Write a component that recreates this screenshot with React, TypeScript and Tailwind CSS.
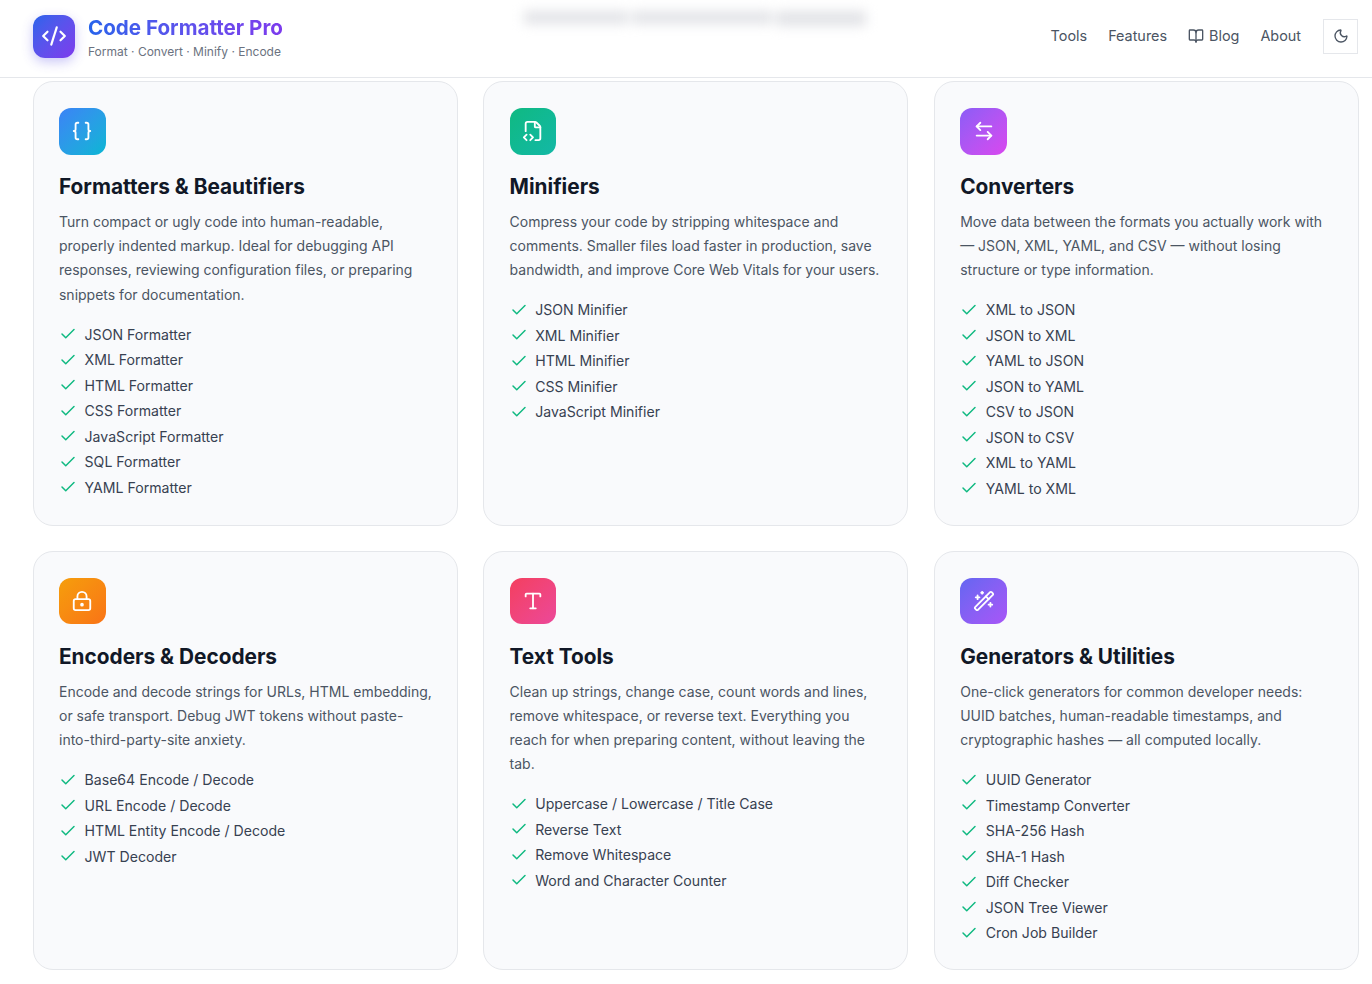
import React from 'react';
import { ArrowLeftRight, BookOpen, Braces, Check, CodeXml, FileCode2, LockKeyhole, Moon, Type, WandSparkles } from 'lucide-react';

interface ToolGroup {
  title: string;
  description: string;
  icon: React.ElementType;
  iconClass: string;
  tools: string[];
}

const groups: ToolGroup[] = [
  {
    title: 'Formatters & Beautifiers',
    description:
      'Turn compact or ugly code into human-readable, properly indented markup. Ideal for debugging API responses, reviewing configuration files, or preparing snippets for documentation.',
    icon: Braces,
    iconClass: 'from-[#3b82f6] to-[#06b6d4]',
    tools: ['JSON Formatter', 'XML Formatter', 'HTML Formatter', 'CSS Formatter', 'JavaScript Formatter', 'SQL Formatter', 'YAML Formatter'],
  },
  {
    title: 'Minifiers',
    description:
      'Compress your code by stripping whitespace and comments. Smaller files load faster in production, save bandwidth, and improve Core Web Vitals for your users.',
    icon: FileCode2,
    iconClass: 'from-[#10b981] to-[#14b8a6]',
    tools: ['JSON Minifier', 'XML Minifier', 'HTML Minifier', 'CSS Minifier', 'JavaScript Minifier'],
  },
  {
    title: 'Converters',
    description:
      'Move data between the formats you actually work with — JSON, XML, YAML, and CSV — without losing structure or type information.',
    icon: ArrowLeftRight,
    iconClass: 'from-[#8b5cf6] to-[#d946ef]',
    tools: ['XML to JSON', 'JSON to XML', 'YAML to JSON', 'JSON to YAML', 'CSV to JSON', 'JSON to CSV', 'XML to YAML', 'YAML to XML'],
  },
  {
    title: 'Encoders & Decoders',
    description:
      'Encode and decode strings for URLs, HTML embedding, or safe transport. Debug JWT tokens without paste-into-third-party-site anxiety.',
    icon: LockKeyhole,
    iconClass: 'from-[#f59e0b] to-[#f97316]',
    tools: ['Base64 Encode / Decode', 'URL Encode / Decode', 'HTML Entity Encode / Decode', 'JWT Decoder'],
  },
  {
    title: 'Text Tools',
    description:
      'Clean up strings, change case, count words and lines, remove whitespace, or reverse text. Everything you reach for when preparing content, without leaving the tab.',
    icon: Type,
    iconClass: 'from-[#f43f5e] to-[#ec4899]',
    tools: ['Uppercase / Lowercase / Title Case', 'Reverse Text', 'Remove Whitespace', 'Word and Character Counter'],
  },
  {
    title: 'Generators & Utilities',
    description:
      'One-click generators for common developer needs: UUID batches, human-readable timestamps, and cryptographic hashes — all computed locally.',
    icon: WandSparkles,
    iconClass: 'from-[#6366f1] to-[#a855f7]',
    tools: ['UUID Generator', 'Timestamp Converter', 'SHA-256 Hash', 'SHA-1 Hash', 'Diff Checker', 'JSON Tree Viewer', 'Cron Job Builder'],
  },
];

const ToolCard: React.FC<{ group: ToolGroup }> = ({ group }) => {
  const Icon = group.icon;
  return (
    <div className="rounded-[20px] border border-[#e5e7eb] bg-[#f9fafc] pt-[26px] pr-[24px] pb-[23.7px] pl-[25.2px]">
      <div className={`flex h-[46.6px] w-[46.8px] items-center justify-center rounded-[12px] bg-gradient-to-br text-white ${group.iconClass}`}>
        <Icon className="h-[22px] w-[22px]" strokeWidth={2} />
      </div>
      <h3 className="mt-[18.8px] text-[20.8px] leading-[28px] font-bold text-[#111827]">{group.title}</h3>
      <p className="mt-[8.6px] text-[14px] leading-[24.2px] text-[#4b5563]">{group.description}</p>
      <ul className="mt-[14.65px] flex flex-col">
        {group.tools.map((tool) => (
          <li key={tool} className="flex h-[25.5px] items-center gap-[7.6px] text-[14.1px] text-[#374151]">
            <Check className="h-[18px] w-[18px] text-[#10b981]" strokeWidth={2} />
            {tool}
          </li>
        ))}
      </ul>
    </div>
  );
};

export default function App() {
  return (
    <div className="h-[984px] overflow-hidden bg-white font-['Inter',sans-serif]">
      <header className="relative flex h-[78px] items-center justify-between border-b border-[#e5e7eb] pr-[14px] pb-[5px] pl-[33px]">
        <div className="flex items-center gap-[13px]">
          <div className="flex h-[43px] w-[42px] items-center justify-center rounded-[12px] bg-gradient-to-br from-[#2563eb] to-[#7c3aed] text-white shadow-[0_4px_12px_rgba(79,70,229,0.3)]">
            <CodeXml className="h-[26px] w-[26px]" strokeWidth={2} />
          </div>
          <div className="pt-[3px]">
            <div className="bg-gradient-to-r from-[#2563eb] to-[#7c3aed] bg-clip-text text-[20.6px] leading-[26px] font-bold text-transparent">
              Code Formatter Pro
            </div>
            <div className="mt-[3px] text-[12px] leading-[16px] text-[#6b7280]">Format · Convert · Minify · Encode</div>
          </div>
        </div>
        <div aria-hidden="true" className="absolute top-[11px] left-[524px] flex gap-[4px] blur-[6px]">
          <div className="h-[13px] w-[104px] bg-[#e2e3e7]" />
          <div className="h-[13px] w-[140px] bg-[#e2e3e7]" />
          <div className="h-[15px] w-[90px] bg-[#e2e3e7]" />
        </div>
        <nav className="flex items-center text-[14.4px] text-[#4b5563]">
          <a className="mr-[21px]">Tools</a>
          <a className="mr-[21px]">Features</a>
          <a className="mr-[21px] flex items-center gap-[5px]">
            <BookOpen className="h-[16px] w-[16px]" strokeWidth={2} />
            Blog
          </a>
          <a className="mr-[22px]">About</a>
          <button className="flex h-[35px] w-[35px] items-center justify-center border border-[#e5e7eb]">
            <Moon className="h-[16px] w-[16px]" strokeWidth={2} />
          </button>
        </nav>
      </header>
      <main className="grid grid-cols-3 items-stretch gap-x-[25.6px] gap-y-[24.8px] pt-[3px] pr-[13px] pl-[32.8px]">
        {groups.map((group) => (
          <ToolCard key={group.title} group={group} />
        ))}
      </main>
    </div>
  );
}
